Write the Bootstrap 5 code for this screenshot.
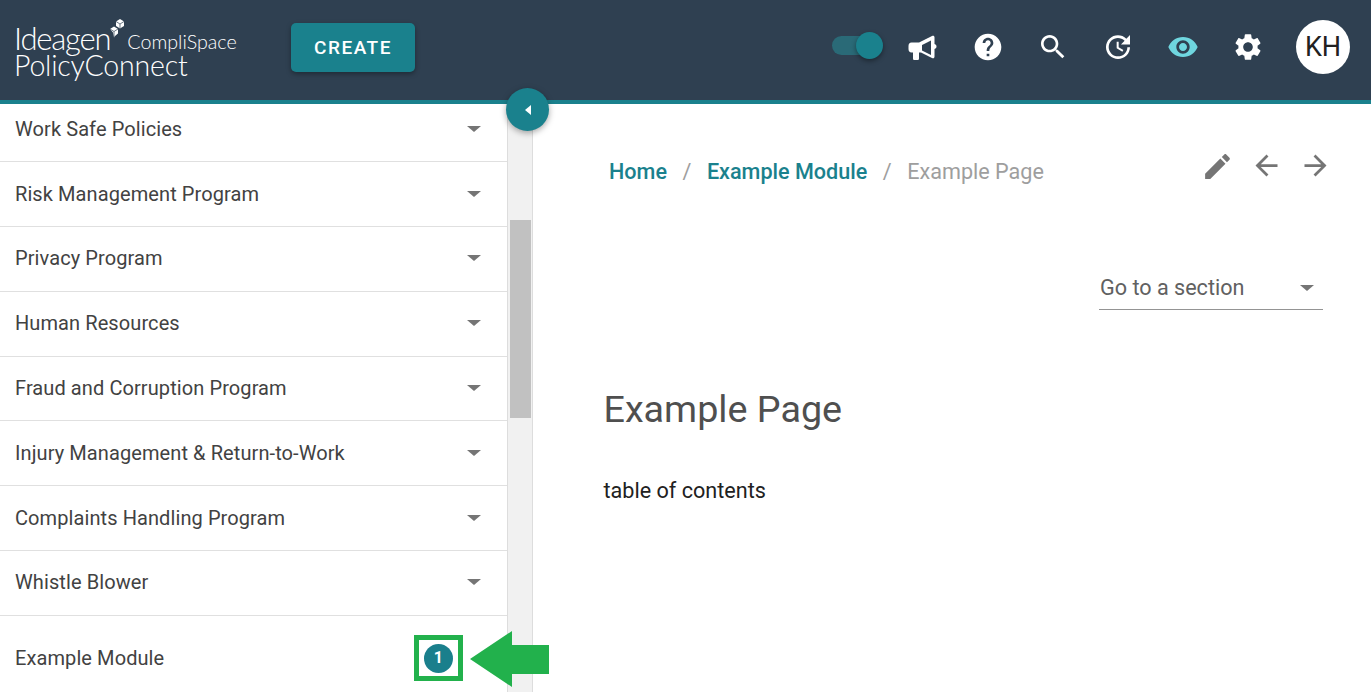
<!DOCTYPE html>
<html lang="en">
<head>
    <meta charset="UTF-8">
    <meta name="viewport" content="width=device-width, initial-scale=1.0">
    <title>PolicyConnect - Example Page</title>
    <link rel="stylesheet" href="https://cdn.jsdelivr.net/npm/bootstrap@5.3.0/dist/css/bootstrap.min.css">

    <style>
        html, body { height: 100%; overflow: hidden; }
        body { font-family: Roboto, "Liberation Sans", sans-serif; color: #212121; }

        /* Top bar */
        .top-bar { height: 104px; background: #2f4051; border-bottom: 4px solid #1a818d; padding: 0 21px 6px 14px; flex-shrink: 0; }
        .logo-block { width: 277px; margin-top: 9px; color: #fff; font-family: Lato, Roboto, sans-serif; font-weight: 300; }
        .logo-top { height: 26px; line-height: 26px; }
        .logo-ideagen { font-size: 31px; letter-spacing: -1.2px; }
        .logo-mark { margin: -20px 0 0 -1px; flex-shrink: 0; }
        .logo-compli { font-size: 19.7px; margin: 8px 0 0 2px; line-height: 20px; }
        .logo-product { font-size: 28.5px; letter-spacing: -.2px; line-height: 28px; }
        .create-btn { width: 124px; height: 49px; padding-top: 4px; background: #1a818d; border: 0; border-radius: 5px; color: #fff; font-weight: 500; font-size: 19px; letter-spacing: 1.5px; box-shadow: 0 2px 5px rgba(0,0,0,.35); }
        .top-icons { gap: 33px; }
        .top-icons svg { width: 32px; height: 32px; fill: #fff; display: block; }
        .top-icons svg.eye-on { fill: #6fd6df; }
        .top-icons svg.horn { margin-left: -9px; margin-top: 3px; }
        .view-toggle { width: 51px; height: 27px; position: relative; margin-top: -3px; }
        .toggle-track { position: absolute; left: 0; top: 4px; width: 46px; height: 19px; border-radius: 10px; background: #2a6a77; }
        .toggle-knob { position: absolute; right: 0; top: 0; width: 27px; height: 27px; border-radius: 50%; background: #1a818d; box-shadow: 0 2px 5px rgba(0,0,0,.4); }
        .avatar { width: 54px; height: 54px; border-radius: 50%; background: #fff; color: #212121; font-size: 27px; margin-left: -1px; }

        /* Sidebar */
        .side-wrap { width: 533px; flex-shrink: 0; }
        .side-list { width: 507px; margin-top: -6.55px; }
        .side-row { height: 64.8px; padding: 0 26px 1px 15px; font-size: 20px; letter-spacing: .09px; color: #424242; border-bottom: 1px solid #e0e0e0; }
        .side-row.last { height: 86px; border-bottom: 0; }
        .caret-down { width: 0; height: 0; border-left: 7.5px solid transparent; border-right: 7.5px solid transparent; border-top: 6px solid #757575; }
        .side-scroll { width: 26px; background: #f1f1f1; border-left: 1px solid #ddd; border-right: 1px solid #ddd; padding: 116px 1px 0 2px; }
        .scroll-thumb { height: 198px; background: #c1c1c1; }
        .count-pill { width: 29px; height: 29px; border-radius: 50%; background: #1a7f8c; color: #fff; font-size: 16px; font-weight: 700; margin-right: 28px; }

        /* Things that lie over the page */
        .over-layer { position: absolute; left: 0; top: 104px; z-index: 5; }
        .collapse-btn { position: absolute; left: 506px; top: -16px; width: 43px; height: 43px; border-radius: 50%; background: #1a818d; box-shadow: 0 2px 6px rgba(0,0,0,.35); }
        .collapse-arrow { width: 0; height: 0; border-top: 5px solid transparent; border-bottom: 5px solid transparent; border-right: 6px solid #fff; }
        .note-box { position: absolute; left: 414px; top: 531px; width: 49px; height: 46px; border: 5px solid #22b14c; }
        .note-arrow { position: absolute; left: 469px; top: 526px; }

        /* Main */
        .page-main { padding: 0 48px 0 70.5px; }
        .crumb-row { margin-top: 45px; }
        .crumbs { font-size: 21.6px; margin: 7px 0 0 5.5px; --bs-breadcrumb-divider-color: #9e9e9e; --bs-breadcrumb-item-active-color: #9e9e9e; --bs-breadcrumb-item-padding-x: 15.5px; }
        .crumbs a { color: #1a818d; text-decoration: none; font-weight: 500; }
        .page-actions { gap: 16px; margin-right: -8.5px; }
        .page-actions svg { width: 33px; height: 33px; fill: #757575; display: block; }
        .page-actions svg.edit-icon { margin: 1px 0 0 0; }
        .section-pick { width: 224px; height: 47px; margin-top: 75px; font-size: 21.6px; color: #616161; border-bottom: 1px solid #949494; padding: 3px 9px 0 1px; }
        .page-title { font-size: 37.7px; font-weight: 400; color: #4f4f4f; margin: 77px 0 0; line-height: 45px; }
        .page-text { font-size: 21.6px; margin: 46px 0 0; color: #212121; line-height: 26px; }
    </style>
</head>
<body class="d-flex flex-column">

    <!-- Header -->
    <header class="top-bar d-flex align-items-center">
        <div class="logo-block">
            <div class="logo-top d-flex align-items-center">
                <span class="logo-ideagen">Ideagen</span>
                <svg class="logo-mark" width="16" height="20" viewBox="0 0 16 20"><path d="M7 3.500L11 1l4 2.500v4.500L11 10.500 7 8z" fill="#fff"/><path d="M7 3.500l4 2.500 4-2.500M11 6v4.500" fill="none" stroke="#2f4051" stroke-width=".7"/><path d="M1 11l4-2.500L9 11v4.500l-3 2.500-1 1.500-1-5z" fill="#fff"/><path d="M1 11l4 2.500L9 11M5 13.500V19" fill="none" stroke="#2f4051" stroke-width=".7"/></svg>
                <span class="logo-compli">CompliSpace</span>
            </div>
            <div class="logo-product">PolicyConnect</div>
        </div>
        <button class="create-btn" type="button">CREATE</button>

        <div class="top-icons d-flex align-items-center ms-auto">
            <div class="view-toggle"><span class="toggle-track"></span><span class="toggle-knob"></span></div>
            <svg class="horn" viewBox="0 0 32 32"><path fill-rule="evenodd" d="M4.500 9.500H12L25 3c1.500-.7 2.500 0 2.500 1.500V11c1.500.5 2 1.500 2 2.500s-.5 2-2 2.500v7.500c0 1.500-1 2.200-2.500 1.500L14 19.500h-2v6c0 1-.7 1.500-1.500 1.500h-3C6.700 27 6 26.500 6 25.500v-6H4.500c-2 0-3-1.500-3-3.500v-3c0-2 1-3.500 3-3.500zM15 12v5.500l9 4.500V7.500z"/></svg>
            <svg viewBox="0 0 24 24"><path d="M12 2C6.48 2 2 6.48 2 12s4.48 10 10 10 10-4.48 10-10S17.52 2 12 2zm1 17h-2v-2h2v2zm2.07-7.75l-.9.92C13.45 12.9 13 13.5 13 15h-2v-.5c0-1.1.45-2.1 1.17-2.83l1.24-1.26c.37-.36.59-.86.59-1.41 0-1.1-.9-2-2-2s-2 .9-2 2H8c0-2.21 1.79-4 4-4s4 1.79 4 4c0 .88-.36 1.68-.93 2.25z"/></svg>
            <svg viewBox="0 0 24 24"><path d="M15.5 14h-.79l-.28-.27C15.41 12.59 16 11.11 16 9.5 16 5.91 13.09 3 9.5 3S3 5.91 3 9.5 5.91 16 9.5 16c1.61 0 3.09-.59 4.23-1.57l.27.28v.79l5 4.99L20.49 19l-4.99-5zm-6 0C7.01 14 5 11.99 5 9.5S7.01 5 9.5 5 14 7.01 14 9.5 11.99 14 9.5 14z"/></svg>
            <svg viewBox="0 0 24 24"><path d="M21 10.12h-6.78l2.74-2.82c-2.73-2.7-7.15-2.8-9.88-.1-2.73 2.71-2.73 7.08 0 9.79s7.15 2.71 9.88 0C18.32 15.65 19 14.08 19 12.1h2c0 1.98-.88 4.55-2.64 6.29-3.51 3.48-9.21 3.48-12.72 0-3.5-3.47-3.53-9.11-.02-12.58s9.14-3.47 12.65 0L21 3v7.12zM12.5 8v4.25l3.5 2.08-.72 1.21L11 13V8h1.500z"/></svg>
            <svg class="eye-on" viewBox="0 0 24 24"><path d="M12 4.500C7 4.500 2.730 7.610 1 12c1.730 4.390 6 7.500 11 7.500s9.270-3.110 11-7.500c-1.730-4.390-6-7.500-11-7.500zM12 17c-2.760 0-5-2.240-5-5s2.240-5 5-5 5 2.240 5 5-2.240 5-5 5zm0-8c-1.660 0-3 1.340-3 3s1.340 3 3 3 3-1.340 3-3-1.340-3-3-3z"/></svg>
            <svg viewBox="0 0 24 24"><path d="M19.14 12.94c.04-.3.06-.61.06-.94 0-.32-.02-.64-.07-.94l2.03-1.58c.18-.14.23-.41.12-.61l-1.92-3.32c-.12-.22-.37-.29-.59-.22l-2.39.96c-.5-.38-1.03-.7-1.62-.94l-.36-2.54c-.04-.24-.24-.41-.48-.41h-3.84c-.24 0-.43.17-.47.41l-.36 2.54c-.59.24-1.13.57-1.62.94l-2.39-.96c-.22-.08-.47 0-.59.22L2.74 8.87c-.12.21-.08.47.12.61l2.03 1.58c-.05.3-.09.63-.09.94s.02.64.07.94l-2.03 1.58c-.18.14-.23.41-.12.61l1.92 3.32c.12.22.37.29.59.22l2.39-.96c.5.38 1.03.7 1.62.94l.36 2.54c.05.24.24.41.48.41h3.84c.24 0 .44-.17.47-.41l.36-2.54c.59-.24 1.13-.56 1.62-.94l2.39.96c.22.08.47 0 .59-.22l1.92-3.32c.12-.22.07-.47-.12-.61l-2.01-1.58zM12 15.6c-1.98 0-3.6-1.62-3.6-3.6s1.62-3.6 3.6-3.6 3.6 1.62 3.6 3.6-1.62 3.6-3.6 3.6z"/></svg>
            <div class="avatar d-flex align-items-center justify-content-center">KH</div>
        </div>
    </header>

    <div class="d-flex flex-grow-1 overflow-hidden">
        <!-- Sidebar -->
        <aside class="side-wrap d-flex">
            <div class="side-list">
                <div class="side-row d-flex align-items-center justify-content-between">Work Safe Policies <span class="caret-down"></span></div>
                <div class="side-row d-flex align-items-center justify-content-between">Risk Management Program <span class="caret-down"></span></div>
                <div class="side-row d-flex align-items-center justify-content-between">Privacy Program <span class="caret-down"></span></div>
                <div class="side-row d-flex align-items-center justify-content-between">Human Resources <span class="caret-down"></span></div>
                <div class="side-row d-flex align-items-center justify-content-between">Fraud and Corruption Program <span class="caret-down"></span></div>
                <div class="side-row d-flex align-items-center justify-content-between">Injury Management &amp; Return-to-Work <span class="caret-down"></span></div>
                <div class="side-row d-flex align-items-center justify-content-between">Complaints Handling Program <span class="caret-down"></span></div>
                <div class="side-row d-flex align-items-center justify-content-between">Whistle Blower <span class="caret-down"></span></div>
                <div class="side-row last d-flex align-items-center justify-content-between">Example Module <span class="count-pill d-flex align-items-center justify-content-center">1</span></div>
            </div>
            <div class="side-scroll"><div class="scroll-thumb"></div></div>
        </aside>

        <!-- Page content -->
        <main class="page-main flex-grow-1">
            <div class="crumb-row d-flex justify-content-between align-items-start">
                <nav aria-label="breadcrumb">
                    <ol class="breadcrumb crumbs">
                        <li class="breadcrumb-item"><a href="#">Home</a></li>
                        <li class="breadcrumb-item"><a href="#">Example Module</a></li>
                        <li class="breadcrumb-item active" aria-current="page">Example Page</li>
                    </ol>
                </nav>
                <div class="page-actions d-flex">
                    <svg class="edit-icon" viewBox="0 0 24 24"><path d="M3 17.250V21h3.750L17.810 9.940l-3.750-3.750L3 17.250zM20.710 7.040c.39-.39.39-1.020 0-1.410l-2.340-2.340c-.39-.39-1.020-.39-1.410 0l-1.830 1.830 3.750 3.750 1.830-1.830z"/></svg>
                    <svg viewBox="0 0 24 24"><path d="M20 11H7.830l5.590-5.590L12 4l-8 8 8 8 1.410-1.410L7.830 13H20v-2z"/></svg>
                    <svg viewBox="0 0 24 24"><path d="M4 11h12.170l-5.590-5.590L12 4l8 8-8 8-1.410-1.410L16.170 13H4v-2z"/></svg>
                </div>
            </div>
            <div class="d-flex justify-content-end">
                <div class="section-pick d-flex align-items-center justify-content-between">Go to a section <span class="caret-down"></span></div>
            </div>
            <h1 class="page-title">Example Page</h1>
            <p class="page-text">table of contents</p>
        </main>
    </div>

    <!-- Collapse handle and the green annotation -->
    <div class="over-layer">
        <div class="collapse-btn d-flex align-items-center justify-content-center"><span class="collapse-arrow"></span></div>
        <div class="note-box"></div>
        <svg class="note-arrow" width="81" height="58" viewBox="0 0 81 58"><path d="M1 29L43 1V15H80V44H43V57Z" fill="#22b14c"/></svg>
    </div>

    <script src="https://cdn.jsdelivr.net/npm/bootstrap@5.3.0/dist/js/bootstrap.bundle.min.js"></script>
</body>
</html>
